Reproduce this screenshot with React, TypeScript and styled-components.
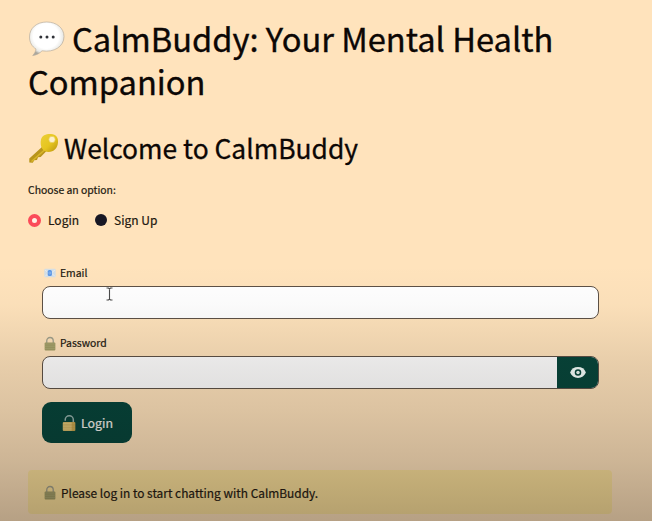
import React from "react";
import styled, { createGlobalStyle } from "styled-components";

const GlobalStyle = createGlobalStyle`
  * { box-sizing: border-box; }
  html, body { margin: 0; height: 100%; overflow: hidden; background: #ffe3bc; }
  body { font-family: "Noto Sans CJK SC", "Noto Sans", sans-serif; color: #21170f; }
`;

const Page = styled.main`
  position: relative;
  height: 521px;
  padding: 17px 40px 0 28px;
  overflow: hidden;
  background: #ffe3bc;
`;

const Shade = styled.div`
  position: absolute;
  inset: 0;
  pointer-events: none;
  background: linear-gradient(
    to bottom,
    rgba(20, 12, 8, 0) 265px,
    rgba(20, 12, 8, 0.02) 305px,
    rgba(20, 12, 8, 0.1) 365px,
    rgba(20, 12, 8, 0.15) 410px,
    rgba(20, 12, 8, 0.21) 460px,
    rgba(20, 12, 8, 0.31) 521px
  );
`;

const Title = styled.h1`
  margin: 0;
  font-size: 32.65px;
  line-height: 42.5px;
  font-weight: 400;
  white-space: nowrap;
  color: #0c0705;
  -webkit-text-stroke: 0.35px currentColor;
`;

const Subtitle = styled.h2`
  display: flex;
  align-items: center;
  gap: 5px;
  margin: 28px 0 0;
  font-size: 26.4px;
  line-height: 36px;
  font-weight: 400;
  white-space: nowrap;
  color: #0c0705;
  -webkit-text-stroke: 0.3px currentColor;
`;

const TitleLine = styled.span`
  display: flex;
  align-items: center;
  gap: 7px;
`;

const Text = styled.span<{ $size: number }>`
  font-size: ${(p) => p.$size}px;
  -webkit-text-stroke: 0.2px currentColor;
  white-space: nowrap;
`;

const Prompt = styled.div`
  margin-top: 16px;
  height: 16px;
  line-height: 16px;
  display: flex;
`;

const Radios = styled.div`
  display: flex;
  gap: 16px;
  margin-top: 12px;
  height: 20px;
`;

const RadioLabel = styled.label`
  display: flex;
  align-items: center;
  gap: 7px;
  line-height: 20px;
`;

const Dot = styled.span<{ $selected?: boolean }>`
  width: ${(p) => (p.$selected ? 13 : 12)}px;
  height: ${(p) => (p.$selected ? 13 : 12)}px;
  border-radius: 50%;
  border: ${(p) => (p.$selected ? "4px solid #fb4b59" : "0")};
  background: ${(p) => (p.$selected ? "#fff1e4" : "#171724")};
`;

const Form = styled.form`
  display: flex;
  flex-direction: column;
  align-items: flex-start;
  width: 557px;
  margin: 35px 0 0 14px;
`;

const FieldLabel = styled.label`
  display: flex;
  align-items: center;
  gap: 4px;
  height: 16px;
  padding-left: 2px;
  line-height: 16px;
`;

const Field = styled.div<{ $gap: number }>`
  display: flex;
  justify-content: flex-end;
  width: 100%;
  height: 33px;
  margin: 5px 0 ${(p) => p.$gap}px;
  border: 1.5px solid #5d5146;
  border-radius: 8px;
  background: #fff;
  overflow: hidden;
`;

const Reveal = styled.button`
  display: flex;
  align-items: center;
  justify-content: center;
  width: 41px;
  height: 100%;
  padding: 0;
  border: 0;
  background: #06453a;
`;

const Submit = styled.button`
  display: flex;
  align-items: center;
  gap: 5px;
  width: 90px;
  height: 41px;
  padding: 0 0 0 20px;
  border: 0;
  border-radius: 9px;
  background: #04443a;
  color: #f3f3ec;
  font-family: inherit;
`;

const Alert = styled.div`
  display: flex;
  align-items: center;
  gap: 5px;
  width: 584px;
  height: 44px;
  margin-top: 27px;
  padding-left: 16px;
  border-radius: 4px;
  background: #fbe19b;
`;

const Cursor = styled.svg`
  position: absolute;
  left: 105px;
  top: 287px;
`;

const SpeechIcon = () => (
  <svg width="37" height="37" viewBox="0 0 37 37">
    <defs>
      <radialGradient id="bubble" cx=".48" cy=".42" r=".57">
        <stop offset=".65" stopColor="#fff" />
        <stop offset=".88" stopColor="#e9e9e5" />
        <stop offset="1" stopColor="#aaa79d" />
      </radialGradient>
    </defs>
    <path
      d="M18.700 2C8.800 2 1.500 8 1.500 17c0 5.500 2.500 9.500 6.500 12-.4 2.700-1.500 4.700-3.300 6.500 4-.4 7-2.200 9.300-4.700 12 2 22-4.300 22-14.300C36 8 28.500 2 18.700 2z"
      fill="url(#bubble)"
      stroke="#b9ae9d"
      strokeWidth=".7"
    />
    <g fill="#303238">
      <circle cx="12.800" cy="17" r="1.500" />
      <circle cx="19" cy="17" r="1.500" />
      <circle cx="25.200" cy="17" r="1.500" />
    </g>
  </svg>
);

const KeyIcon = () => (
  <svg width="31" height="32" viewBox="0 0 31 32">
    <defs>
      <linearGradient id="gold" x1="0" y1="0" x2="1" y2="1">
        <stop offset="0" stopColor="#ecd038" />
        <stop offset=".55" stopColor="#e6c51e" />
        <stop offset="1" stopColor="#b8920f" />
      </linearGradient>
    </defs>
    <path
      d="M14.500 14.500 1.300 26.500v4l3.500.3 1.500-2.600 2.700-.2 1-2.700 2.700-.2 6.300-6.500z"
      fill="#b9951c"
    />
    <path d="m14 14.500 3 3L3.500 29.500" fill="none" stroke="#d9b62a" strokeWidth="1.500" />
    <path
      d="M13 7.500C14 3.500 18 1.800 23 2c5 .3 7.500 3.500 7 8.500-.4 5.500-4 9.500-9.500 9.500-5.500 0-9-5.500-7.500-12.500z"
      fill="url(#gold)"
    />
    <circle cx="24" cy="7.500" r="3.200" fill="#fdf0cc" stroke="#e6cc4d" strokeWidth=".7" />
  </svg>
);

const MailIcon = () => (
  <svg width="12" height="12" viewBox="0 0 12 12">
    <rect x=".3" y="1.800" width="11.400" height="8.400" rx="1" fill="#d3dee6" />
    <path d="m1 3 5 4 5-4M1 9.500l3-3m7 3-3-3" stroke="#e7edf0" fill="none" />
    <rect x="3.700" y="3" width="4.200" height="6" rx="1.600" fill="#5b96e5" />
    <circle cx="5.800" cy="6" r="1" fill="none" stroke="#91bdf0" strokeWidth=".7" />
  </svg>
);

const LockIcon = ({ open = false }: { open?: boolean }) => (
  <svg width={open ? 14 : 12} height={open ? 18 : 15} viewBox="0 0 13 16">
    <path
      d={open ? "M3 6V5a3.700 3.700 0 0 1 7.500 0v4" : "M3 8V5a3.500 3.500 0 0 1 7 0v3"}
      fill="none"
      stroke={open ? "#96b3ad" : "#a0a08c"}
      strokeWidth="1.400"
    />
    <rect x=".7" y="7" width="11.600" height="8.500" rx="1" fill={open ? "#d4b868" : "#a09c64"} />
    <path d="M1 8.500h11M1 11h11M1 13.500h11" stroke={open ? "#e6cc80" : "#aead78"} strokeWidth=".7" />
    {open && <path d="M9 7h3.300v8.500H9z" fill="#b08b2c" opacity=".5" />}
  </svg>
);

const EyeIcon = () => (
  <svg width="18" height="13" viewBox="0 0 18 14">
    <path d="M.5 7C2 3.200 5 1.200 9 1.200S16 3.200 17.500 7C16 10.800 13 12.800 9 12.800S2 10.800.5 7z" fill="#f5fffc" />
    <circle cx="9" cy="7" r="3.500" fill="#06453a" />
    <circle cx="9" cy="7" r="1.900" fill="#e8f6f1" />
  </svg>
);

export default function App() {
  return (
    <>
      <GlobalStyle />
      <Page>
        <Title>
          <TitleLine>
            <SpeechIcon />
            <span>CalmBuddy: Your Mental Health</span>
          </TitleLine>
          <span>Companion</span>
        </Title>
        <Subtitle>
          <KeyIcon />
          <span>Welcome to CalmBuddy</span>
        </Subtitle>
        <Prompt>
          <Text $size={10.4}>Choose an option:</Text>
        </Prompt>
        <Radios>
          <RadioLabel>
            <Dot $selected />
            <Text $size={12}>Login</Text>
          </RadioLabel>
          <RadioLabel>
            <Dot />
            <Text $size={12}>Sign Up</Text>
          </RadioLabel>
        </Radios>
        <Form>
          <FieldLabel>
            <MailIcon />
            <Text $size={10.4}>Email</Text>
          </FieldLabel>
          <Field $gap={16} />
          <FieldLabel>
            <LockIcon />
            <Text $size={10.4}>Password</Text>
          </FieldLabel>
          <Field $gap={13}>
            <Reveal type="button" aria-label="Show password">
              <EyeIcon />
            </Reveal>
          </Field>
          <Submit type="button">
            <LockIcon open />
            <Text $size={12.4}>Login</Text>
          </Submit>
        </Form>
        <Alert>
          <LockIcon />
          <Text $size={11.9}>Please log in to start chatting with CalmBuddy.</Text>
        </Alert>
        <Cursor width="9" height="14" viewBox="0 0 9 14">
          <path d="M1.500 1h2l1 1 1-1h2M4.500 2v10M1.500 13h2l1-1 1 1h2" fill="none" stroke="#4b4b4b" strokeWidth="1.100" />
        </Cursor>
        <Shade />
      </Page>
    </>
  );
}
